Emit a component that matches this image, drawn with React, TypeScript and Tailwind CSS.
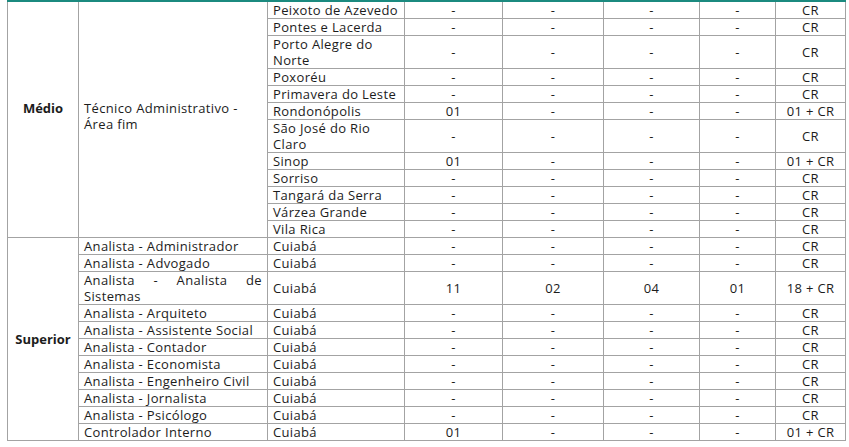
const cities: [string, string, string, string, string, string][] = [
  ['Peixoto de Azevedo', '-', '-', '-', '-', 'CR'],
  ['Pontes e Lacerda', '-', '-', '-', '-', 'CR'],
  ['Porto Alegre do\nNorte', '-', '-', '-', '-', 'CR'],
  ['Poxoréu', '-', '-', '-', '-', 'CR'],
  ['Primavera do Leste', '-', '-', '-', '-', 'CR'],
  ['Rondonópolis', '01', '-', '-', '-', '01 + CR'],
  ['São José do Rio\nClaro', '-', '-', '-', '-', 'CR'],
  ['Sinop', '01', '-', '-', '-', '01 + CR'],
  ['Sorriso', '-', '-', '-', '-', 'CR'],
  ['Tangará da Serra', '-', '-', '-', '-', 'CR'],
  ['Várzea Grande', '-', '-', '-', '-', 'CR'],
  ['Vila Rica', '-', '-', '-', '-', 'CR'],
];

const superior: [string, string, string, string, string, string][] = [
  ['Analista - Administrador', '-', '-', '-', '-', 'CR'],
  ['Analista - Advogado', '-', '-', '-', '-', 'CR'],
  ['Analista - Analista de Sistemas', '11', '02', '04', '01', '18 + CR'],
  ['Analista - Arquiteto', '-', '-', '-', '-', 'CR'],
  ['Analista - Assistente Social', '-', '-', '-', '-', 'CR'],
  ['Analista - Contador', '-', '-', '-', '-', 'CR'],
  ['Analista - Economista', '-', '-', '-', '-', 'CR'],
  ['Analista - Engenheiro Civil', '-', '-', '-', '-', 'CR'],
  ['Analista - Jornalista', '-', '-', '-', '-', 'CR'],
  ['Analista - Psicólogo', '-', '-', '-', '-', 'CR'],
  ['Controlador Interno', '01', '-', '-', '-', '01 + CR'],
];

const cell = 'border border-[#a3a3a3] px-[5px] py-0 align-middle';
const top = 'border-t-2 border-t-[#1b8a7f]';

export default function App() {
  return (
    <div className="bg-white w-[849px] h-[447px] overflow-hidden text-[#1c1c1c] font-['Open_Sans',sans-serif] text-[13px] tracking-[0.35px] leading-[16px]">
      <table className="ml-[7px] w-[838px] table-fixed border-collapse">
        <colgroup>
          <col className="w-[71px]" />
          <col className="w-[189px]" />
          <col className="w-[137px]" />
          <col className="w-[98px]" />
          <col className="w-[101px]" />
          <col className="w-[96px]" />
          <col className="w-[76px]" />
          <col className="w-[70px]" />
        </colgroup>
        <tbody>
          {cities.map((row, i) => (
            <tr key={row[0]}>
              {i === 0 && (
                <>
                  <td rowSpan={cities.length} className={`${cell} ${top} text-center font-bold tracking-normal pb-[24px]`}>
                    Médio
                  </td>
                  <td rowSpan={cities.length} className={`${cell} ${top} pb-[8px] whitespace-nowrap`}>
                    Técnico Administrativo -<br />Área fim
                  </td>
                </>
              )}
              <td className={`${cell} ${i === 0 ? top : ''} whitespace-pre`}>{row[0]}</td>
              {row.slice(1).map((v, j) => (
                <td key={j} className={`${cell} ${i === 0 ? top : ''} text-center whitespace-nowrap`}>
                  {v}
                </td>
              ))}
            </tr>
          ))}
          {superior.map((row, i) => (
            <tr key={row[0]}>
              {i === 0 && (
                <td rowSpan={superior.length} className={`${cell} text-center font-bold tracking-normal`}>
                  Superior
                </td>
              )}
              <td className={`${cell} text-justify`}>{row[0]}</td>
              <td className={cell}>Cuiabá</td>
              {row.slice(1).map((v, j) => (
                <td key={j} className={`${cell} text-center whitespace-nowrap`}>
                  {v}
                </td>
              ))}
            </tr>
          ))}
        </tbody>
      </table>
    </div>
  );
}
